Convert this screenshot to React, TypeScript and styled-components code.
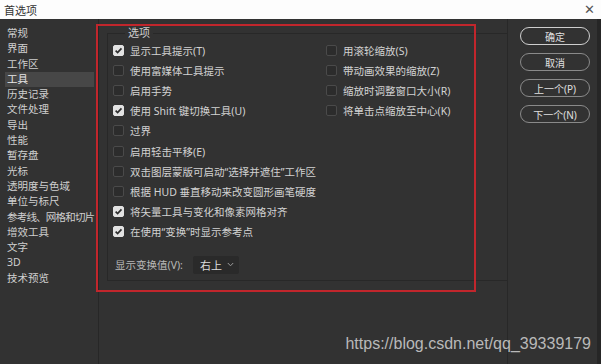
import styled, { createGlobalStyle } from "styled-components";

const GlobalStyle = createGlobalStyle`
    html, body {
        margin: 0;
        padding: 0;
        background: #323232;
    }
    * { box-sizing: border-box; }
`;

const Window = styled.div`
    position: relative;
    width: 601px;
    height: 364px;
    overflow: hidden;
    background: #323232;
    font-family: "Noto Sans", "Noto Sans CJK SC", sans-serif;
    color: #d2d2d2;
`;

const TitleBar = styled.div`
    display: flex;
    align-items: center;
    justify-content: space-between;
    height: 19px;
    padding: 0 6px 0 4px;
    background: #fdfdfd;
    color: #333;
    font-size: 11px;
`;

const Close = styled.span`
    font-family: "DejaVu Sans", sans-serif;
    font-size: 13px;
    color: #555;
`;

const Body = styled.div`
    display: flex;
    height: 345px;
    border-right: 4px solid #262626;
`;

const Sidebar = styled.div`
    width: 99px;
    padding: 7px 4px 0 5px;
    border-right: 1px solid #272727;
    font-size: 10.5px;
`;

const NavItem = styled.div<{ $active?: boolean; $tight?: boolean }>`
    height: 15.3px;
    line-height: 15.3px;
    padding-left: 2px;
    white-space: nowrap;
    letter-spacing: ${(p) => (p.$tight ? "-0.8px" : "0")};
    background: ${(p) => (p.$active ? "#474747" : "transparent")};
    color: ${(p) => (p.$active ? "#e8e8e8" : "#cfcfcf")};
`;

const Content = styled.div`
    width: 409px;
    padding: 8px 0 0 8px;
    border-right: 1px solid #282828;
`;

const Group = styled.fieldset`
    margin: 0;
    height: 254px;
    padding: 1px 0 0 5px;
    border: 1px solid #282828;
    border-right: none;
`;

const Legend = styled.legend`
    margin-left: 12px;
    padding: 0 3px;
    font-size: 11px;
    line-height: 12px;
    color: #cfcfcf;
`;

const Columns = styled.div`
    display: flex;
`;

const Column = styled.div<{ $width: number }>`
    width: ${(p) => p.$width}px;
    display: flex;
    flex-direction: column;
`;

const Row = styled.label`
    display: flex;
    align-items: center;
    gap: 6px;
    height: 20.2px;
    font-size: 10.5px;
    white-space: nowrap;
`;

const Box = styled.span<{ $checked?: boolean }>`
    width: 11px;
    height: 11px;
    border-radius: 2px;
    display: flex;
    align-items: center;
    justify-content: center;
    background: ${(p) => (p.$checked ? "#e2e2e2" : "#2c2c2c")};
    border: 1px solid ${(p) => (p.$checked ? "#e2e2e2" : "#4a4a4a")};
`;

const ValueRow = styled.div`
    display: flex;
    align-items: center;
    gap: 10px;
    margin-top: 14px;
    padding-left: 2px;
    font-size: 10.5px;
    color: #b8b8b8;
`;

const Select = styled.div`
    display: flex;
    align-items: center;
    gap: 5px;
    height: 18px;
    padding: 0 5px 0 7px;
    background: #2a2a2a;
    border-radius: 2px;
    color: #dcdcdc;
    font-size: 11px;
`;

const Buttons = styled.div`
    flex: 1;
    display: flex;
    flex-direction: column;
    gap: 8px;
    padding: 8px 0 0 12px;
`;

const Button = styled.div<{ $primary?: boolean }>`
    width: 70px;
    height: 18px;
    border-radius: 9px;
    border: 1px solid ${(p) => (p.$primary ? "#cfcfcf" : "#8a8a8a")};
    display: flex;
    align-items: center;
    justify-content: center;
    font-size: 10px;
    color: #e0e0e0;
`;

const Highlight = styled.div`
    position: absolute;
    left: 96px;
    top: 24px;
    width: 380px;
    height: 268px;
    border: 2px solid #c1262c;
    pointer-events: none;
`;

const Watermark = styled.div`
    position: absolute;
    right: 10px;
    bottom: 11px;
    font-family: "Liberation Sans", Arial, sans-serif;
    font-size: 16px;
    color: #b9b9b9;
`;

const navItems = [
    "常规", "界面", "工作区", "工具", "历史记录", "文件处理", "导出", "性能", "暂存盘",
    "光标", "透明度与色域", "单位与标尺", "参考线、网格和切片", "增效工具", "文字", "3D", "技术预览",
];

const leftOptions: [string, boolean][] = [
    ["显示工具提示(T)", true],
    ["使用富媒体工具提示", false],
    ["启用手势", false],
    ["使用 Shift 键切换工具(U)", true],
    ["过界", false],
    ["启用轻击平移(E)", false],
    ["双击图层蒙版可启动\u201C选择并遮住\u201D工作区", false],
    ["根据 HUD 垂直移动来改变圆形画笔硬度", false],
    ["将矢量工具与变化和像素网格对齐", true],
    ["在使用\u201C变换\u201D时显示参考点", true],
];

const rightOptions: [string, boolean][] = [
    ["用滚轮缩放(S)", false],
    ["带动画效果的缩放(Z)", false],
    ["缩放时调整窗口大小(R)", false],
    ["将单击点缩放至中心(K)", false],
];

function Check({ checked }: { checked: boolean }) {
    return (
        <Box $checked={checked}>
            {checked && (
                <svg width="9" height="9" viewBox="0 0 10 10">
                    <path d="M1.8 5.2 L4 7.4 L8.3 2.6" fill="none" stroke="#2b2b2b" strokeWidth="1.8" />
                </svg>
            )}
        </Box>
    );
}

function Option({ text, checked }: { text: string; checked: boolean }) {
    return (
        <Row>
            <Check checked={checked} />
            {text}
        </Row>
    );
}

export default function App() {
    return (
        <>
            <GlobalStyle />
            <Window>
                <TitleBar>
                    <span>首选项</span>
                    <Close>✕</Close>
                </TitleBar>
                <Body>
                    <Sidebar>
                        {navItems.map((item) => (
                            <NavItem key={item} $active={item === "工具"} $tight={item.length > 8}>
                                {item}
                            </NavItem>
                        ))}
                    </Sidebar>
                    <Content>
                        <Group>
                            <Legend>选项</Legend>
                            <Columns>
                                <Column $width={213}>
                                    {leftOptions.map(([t, c]) => <Option key={t} text={t} checked={c} />)}
                                </Column>
                                <Column $width={170}>
                                    {rightOptions.map(([t, c]) => <Option key={t} text={t} checked={c} />)}
                                </Column>
                            </Columns>
                            <ValueRow>
                                显示变换值(V):
                                <Select>
                                    右上
                                    <svg width="7" height="5" viewBox="0 0 7 5">
                                        <path d="M0.8 1 L3.5 3.8 L6.2 1" fill="none" stroke="#9a9a9a" strokeWidth="1" />
                                    </svg>
                                </Select>
                            </ValueRow>
                        </Group>
                    </Content>
                    <Buttons>
                        <Button $primary>确定</Button>
                        <Button>取消</Button>
                        <Button>上一个(P)</Button>
                        <Button>下一个(N)</Button>
                    </Buttons>
                </Body>
                <Highlight />
                <Watermark>https://blog.csdn.net/qq_39339179</Watermark>
            </Window>
        </>
    );
}
